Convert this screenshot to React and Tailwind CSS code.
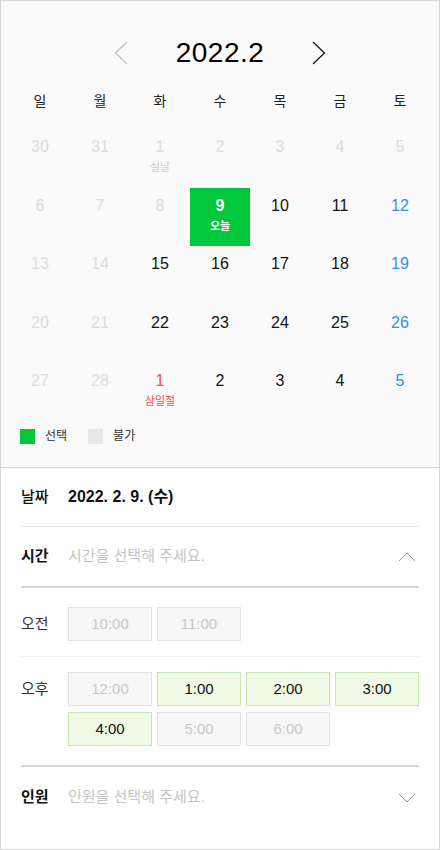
import React from 'react';

const font = { fontFamily: '"Liberation Sans", "Noto Sans CJK KR", sans-serif' };

const weekdays = ['일', '월', '화', '수', '목', '금', '토'];

// kind: past | normal | sat | holiday | today
const weeks = [
  [['30', 'past'], ['31', 'past'], ['1', 'past', '설날'], ['2', 'past'], ['3', 'past'], ['4', 'past'], ['5', 'past']],
  [['6', 'past'], ['7', 'past'], ['8', 'past'], ['9', 'today', '오늘'], ['10', 'normal'], ['11', 'normal'], ['12', 'sat']],
  [['13', 'past'], ['14', 'past'], ['15', 'normal'], ['16', 'normal'], ['17', 'normal'], ['18', 'normal'], ['19', 'sat']],
  [['20', 'past'], ['21', 'past'], ['22', 'normal'], ['23', 'normal'], ['24', 'normal'], ['25', 'normal'], ['26', 'sat']],
  [['27', 'past'], ['28', 'past'], ['1', 'holiday', '삼일절'], ['2', 'normal'], ['3', 'normal'], ['4', 'normal'], ['5', 'sat']],
];

function DayCell({ day, kind, label }) {
  if (kind === 'today') {
    return (
      <div className="flex flex-col items-center bg-[#00c73c] text-white pt-[8px] h-[58px]">
        <span className="text-[16px] font-bold leading-[20px]">{day}</span>
        <span className="text-[11px] font-bold leading-[16px] mt-[2px]">{label}</span>
      </div>
    );
  }
  const color = {
    past: 'text-[#dcdcdc]',
    normal: 'text-[#111]',
    sat: 'text-[#2e8ff5]',
    holiday: 'text-[#ff4b4b]',
  }[kind];
  const labelColor = kind === 'holiday' ? 'text-[#ff4b4b]' : 'text-[#cfcfcf]';
  return (
    <div className={`flex flex-col items-center pt-[8px] h-[58px] ${color}`}>
      <span className="text-[16px] leading-[20px]">{day}</span>
      {label && <span className={`text-[11px] leading-[16px] mt-[2px] ${labelColor}`}>{label}</span>}
    </div>
  );
}

function TimeButton({ time, enabled }) {
  return (
    <div
      className={
        enabled
          ? 'h-[34px] flex items-center justify-center border border-[#c6e6b0] bg-[#effbe6] text-[15px] text-[#111]'
          : 'h-[34px] flex items-center justify-center border border-[#e2e2e2] bg-[#f7f7f7] text-[15px] text-[#c8c8c8]'
      }
    >
      {time}
    </div>
  );
}

function Chevron({ up }) {
  return (
    <svg width="18" height="10" viewBox="0 0 18 10" fill="none">
      <path d={up ? 'M1 9L9 1L17 9' : 'M1 1L9 9L17 1'} stroke="#9a9a9a" strokeWidth="1" />
    </svg>
  );
}

export default function App() {
  return (
    <div style={font} className="w-[440px] h-[850px] border border-[#d6d6d6] bg-white overflow-hidden">
      {/* calendar */}
      <div className="bg-[#fafafa] border-b border-[#d4d4d4] pb-[16px]">
        <div className="h-[87px] pt-[16px] flex items-center justify-center">
          <svg width="14" height="24" viewBox="0 0 14 24" fill="none">
            <path d="M13 1L1.5 12L13 23" stroke="#bdbdbd" strokeWidth="1.2" />
          </svg>
          <span className="text-[28px] text-black leading-none mx-[48px] tracking-[0.5px]">2022.2</span>
          <svg width="14" height="24" viewBox="0 0 14 24" fill="none">
            <path d="M1 1L12.5 12L1 23" stroke="#111" strokeWidth="1.2" />
          </svg>
        </div>
        <div className="grid grid-cols-7 px-[9px] h-[26px] items-center text-[14px] text-[#222]">
          {weekdays.map((w) => (
            <span key={w} className="text-center">{w}</span>
          ))}
        </div>
        <div className="px-[9px] mt-[15px] flex flex-col gap-[0.5px]">
          {weeks.map((week, i) => (
            <div key={i} className="grid grid-cols-7">
              {week.map(([d, k, l], j) => (
                <DayCell key={j} day={d} kind={k} label={l} />
              ))}
            </div>
          ))}
        </div>
        <div className="flex items-center h-[30px] px-[19px] text-[12px] text-[#333]">
          <span className="w-[15px] h-[15px] bg-[#00c73c]" />
          <span className="ml-[10px]">선택</span>
          <span className="w-[15px] h-[15px] bg-[#e8e8e8] ml-[21px]" />
          <span className="ml-[10px]">불가</span>
        </div>
      </div>

      {/* details */}
      <div className="px-[20px]">
        <div className="h-[59px] flex items-center border-b border-[#e9e9e9]">
          <span className="w-[47px] text-[15px] font-medium text-[#111]">날짜</span>
          <span className="text-[16px] font-bold text-[#111]">2022. 2. 9. (수)</span>
        </div>
        <div className="h-[61px] flex items-center border-b-[2px] border-[#d4d4d4]">
          <span className="w-[47px] text-[15px] font-bold text-[#111]">시간</span>
          <span className="flex-1 text-[15px] text-[#c4c4c4]">시간을 선택해 주세요.</span>
          <span className="mr-[3px] flex"><Chevron up /></span>
        </div>
        <div className="flex items-center pt-[19px] pb-[15px] border-b border-[#eeeeee]">
          <span className="w-[47px] text-[15px] text-[#333]">오전</span>
          <div className="flex-1 grid grid-cols-4 gap-[5px]">
            <TimeButton time="10:00" />
            <TimeButton time="11:00" />
          </div>
        </div>
        <div className="flex items-start pt-[15px] pb-[19px] border-b-[2px] border-[#d4d4d4]">
          <span className="w-[47px] text-[15px] text-[#333] h-[34px] flex items-center">오후</span>
          <div className="flex-1 grid grid-cols-4 gap-x-[5px] gap-y-[6px]">
            <TimeButton time="12:00" />
            <TimeButton time="1:00" enabled />
            <TimeButton time="2:00" enabled />
            <TimeButton time="3:00" enabled />
            <TimeButton time="4:00" enabled />
            <TimeButton time="5:00" />
            <TimeButton time="6:00" />
          </div>
        </div>
        <div className="h-[61px] flex items-center">
          <span className="w-[47px] text-[15px] font-bold text-[#111]">인원</span>
          <span className="flex-1 text-[15px] text-[#c4c4c4]">인원을 선택해 주세요.</span>
          <span className="mr-[3px] flex"><Chevron /></span>
        </div>
      </div>
    </div>
  );
}
